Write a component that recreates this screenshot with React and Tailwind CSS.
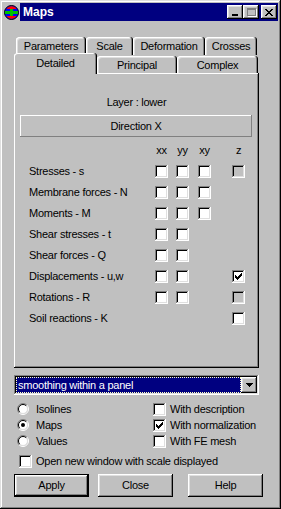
import React from 'react';

// win98 bevels
const RAISED =
  'shadow-[inset_-1px_-1px_0_#000,inset_1px_1px_0_#fff,inset_-2px_-2px_0_#808080,inset_2px_2px_0_#dfdfdf]';
const WINDOW =
  'shadow-[inset_-1px_-1px_0_#000,inset_1px_1px_0_#dfdfdf,inset_-2px_-2px_0_#808080,inset_2px_2px_0_#fff]';
const SUNKEN =
  'shadow-[inset_-1px_-1px_0_#fff,inset_1px_1px_0_#808080,inset_-2px_-2px_0_#dfdfdf,inset_2px_2px_0_#000]';
const TAB = 'shadow-[inset_-1px_0_0_#000,inset_1px_1px_0_#fff,inset_-2px_0_0_#808080,inset_2px_2px_0_#dfdfdf]';

function Check() {
  return (
    <svg width="7" height="7" viewBox="0 0 7 7" shapeRendering="crispEdges">
      <rect x="6" y="0" width="1" height="1" />
      <rect x="5" y="1" width="2" height="1" />
      <rect x="0" y="2" width="1" height="1" />
      <rect x="4" y="2" width="3" height="1" />
      <rect x="0" y="3" width="2" height="1" />
      <rect x="3" y="3" width="3" height="1" />
      <rect x="0" y="4" width="5" height="1" />
      <rect x="1" y="5" width="3" height="1" />
      <rect x="2" y="6" width="1" height="1" />
    </svg>
  );
}

function Box({ checked, disabled }) {
  return (
    <div
      className={`w-[13px] h-[13px] shrink-0 flex items-center justify-center ${SUNKEN} ${
        disabled ? 'bg-[#c0c0c0]' : 'bg-white'
      }`}
    >
      {checked && <Check />}
    </div>
  );
}

function Radio({ checked }) {
  return (
    <svg width="12" height="12" viewBox="0 0 12 12" className="shrink-0">
      <circle cx="6" cy="6" r="4.5" fill="#fff" />
      <path d="M2.1 9.9 A5.5 5.5 0 0 1 9.9 2.1" fill="none" stroke="#808080" />
      <path d="M9.9 2.1 A5.5 5.5 0 0 1 2.1 9.9" fill="none" stroke="#fff" />
      <path d="M2.8 9.2 A4.5 4.5 0 0 1 9.2 2.8" fill="none" stroke="#000" />
      <path d="M9.2 2.8 A4.5 4.5 0 0 1 2.8 9.2" fill="none" stroke="#dfdfdf" />
      {checked && <circle cx="6" cy="6" r="2" fill="#000" />}
    </svg>
  );
}

function TitleBtn({ children }) {
  return (
    <div className={`w-[16px] h-[14px] bg-[#c0c0c0] flex items-center justify-center ${RAISED}`}>
      {children}
    </div>
  );
}

const rows = [
  ['Stresses - s', [0, 0, 0, 'd']],
  ['Membrane forces - N', [0, 0, 0, null]],
  ['Moments - M', [0, 0, 0, null]],
  ['Shear stresses - t', [0, 0, null, null]],
  ['Shear forces - Q', [0, 0, null, null]],
  ['Displacements - u,w', [0, 0, null, 'c']],
  ['Rotations - R', [0, 0, null, 'd']],
  ['Soil reactions - K', [null, null, null, 0]],
];

function Cell({ v, className }) {
  return (
    <div className={`w-[13px] h-[13px] ${className}`}>
      {v !== null && <Box checked={v === 'c'} disabled={v === 'd'} />}
    </div>
  );
}

export default function App() {
  return (
    <div
      className={`w-[281px] h-[509px] bg-[#c0c0c0] p-[3px] flex flex-col text-[11px] leading-[13px] tracking-[-0.25px] text-black font-['Liberation_Sans',Arial,sans-serif] ${WINDOW}`}
    >
      {/* title bar */}
      <div className="h-[18px] bg-[#000080] flex items-center pr-[1px] tracking-normal">
        <div className="w-[17px] h-[18px] bg-[#c0c0c0] flex items-center justify-center">
          <svg width="15" height="15" viewBox="0 0 15 15">
            <circle cx="7.5" cy="7.5" r="7" fill="#0000ff" stroke="#000" />
            <path d="M2.5 4 A6 6 0 0 1 12.5 4 Z" fill="#ff0000" />
            <path d="M2.5 11 A6 6 0 0 0 12.5 11 Z" fill="#ff0000" />
            <rect x="1" y="6" width="13" height="3" fill="#00c000" />
            <rect x="6" y="4" width="3" height="7" fill="#00c000" />
          </svg>
        </div>
        <span className="ml-[3px] text-white font-bold text-[12px]">Maps</span>
        <div className="ml-auto flex items-center">
          <TitleBtn>
            <div className="w-[6px] h-[2px] bg-black mt-[6px] -ml-[1px]" />
          </TitleBtn>
          <TitleBtn>
            <div className="w-[9px] h-[8px] border border-t-2 border-[#808080] shadow-[1px_1px_0_#fff]" />
          </TitleBtn>
          <div className="w-[2px]" />
          <TitleBtn>
            <svg width="8" height="7" viewBox="0 0 8 7" shapeRendering="crispEdges">
              <path d="M0 0h2v1h-2zM6 0h2v1h-2zM1 1h2v1h-2zM5 1h2v1h-2zM2 2h4v1h-4zM3 3h2v1h-2zM2 4h4v1h-4zM1 5h2v1h-2zM5 5h2v1h-2zM0 6h2v1h-2zM6 6h2v1h-2z" />
            </svg>
          </TitleBtn>
        </div>
      </div>

      {/* tabs */}
      <div className="mt-[16px] ml-[13px] flex h-[18px]">
        <div className={`w-[70px] h-[18px] rounded-t-[3px] flex justify-center pt-[3px] ${TAB}`}>Parameters</div>
        <div className={`w-[47px] h-[18px] rounded-t-[3px] flex justify-center pt-[3px] ${TAB}`}>Scale</div>
        <div className={`w-[72px] h-[18px] rounded-t-[3px] flex justify-center pt-[3px] ${TAB}`}>Deformation</div>
        <div className={`w-[52px] h-[18px] rounded-t-[3px] flex justify-center pt-[3px] ${TAB}`}>Crosses</div>
      </div>
      <div className="ml-[11px] flex h-[18px] items-start">
        <div
          className={`relative z-10 -mt-[2px] w-[83px] h-[21px] bg-[#c0c0c0] rounded-t-[3px] flex justify-center pt-[4px] shadow-[inset_-1px_0_0_#000,inset_1px_1px_0_#fff,inset_-2px_0_0_#808080]`}
        >
          Detailed
        </div>
        <div className={`mt-[1px] w-[80px] h-[17px] rounded-t-[3px] flex justify-center pt-[3px] ${TAB}`}>Principal</div>
        <div className={`mt-[1px] w-[81px] h-[17px] rounded-t-[3px] flex justify-center pt-[3px] ${TAB}`}>Complex</div>
      </div>

      {/* panel */}
      <div
        className={`ml-[11px] w-[245px] h-[295px] flex flex-col pt-[23px] shadow-[inset_-1px_-1px_0_#000,inset_1px_1px_0_#fff,inset_-2px_-2px_0_#808080]`}
      >
        <div className="text-center">Layer : lower</div>
        <div
          className={`mt-[6px] ml-[6px] w-[232px] h-[22px] flex items-center justify-center shadow-[inset_-1px_-1px_0_#808080,inset_1px_1px_0_#fff]`}
        >
          Direction X
        </div>
        <div className="mt-[3px] h-[21px] flex items-center pl-[141px]">
          <div className="w-[13px] text-center">xx</div>
          <div className="w-[13px] ml-[8px] text-center">yy</div>
          <div className="w-[13px] ml-[9px] text-center">xy</div>
          <div className="w-[13px] ml-[21px] text-center">z</div>
        </div>
        {rows.map(([label, v]) => (
          <div key={label} className="h-[21px] flex items-center pl-[15px]">
            <div className="w-[126px]">{label}</div>
            <Cell v={v[0]} className="" />
            <Cell v={v[1]} className="ml-[8px]" />
            <Cell v={v[2]} className="ml-[9px]" />
            <Cell v={v[3]} className="ml-[21px]" />
          </div>
        ))}
      </div>

      {/* combo */}
      <div className={`mt-[7px] ml-[11px] w-[245px] h-[20px] bg-white p-[2px] flex ${SUNKEN}`}>
        <div className="flex-1 bg-[#000080] border border-dotted border-[#ffffc0] text-white flex items-center pl-[1px]">
          smoothing within a panel
        </div>
        <div className={`w-[16px] bg-[#c0c0c0] flex items-center justify-center ${RAISED}`}>
          <svg width="7" height="4" viewBox="0 0 7 4" shapeRendering="crispEdges">
            <path d="M0 0h7v1h-7zM1 1h5v1h-5zM2 2h3v1h-3zM3 3h1v1h-1z" />
          </svg>
        </div>
      </div>

      {/* options */}
      <div className="mt-[6px] flex flex-col">
        {[
          ['Isolines', false, 'With description', false],
          ['Maps', true, 'With normalization', true],
          ['Values', false, 'With FE mesh', false],
        ].map(([r, rc, c, cc]) => (
          <div key={r} className="h-[16px] flex items-center">
            <div className="w-[150px] pl-[14px] flex items-center gap-[7px]">
              <Radio checked={rc} />
              <span>{r}</span>
            </div>
            <div className="flex items-center gap-[4px]">
              <Box checked={cc} />
              <span>{c}</span>
            </div>
          </div>
        ))}
        <div className="mt-[4px] h-[16px] flex items-center pl-[16px] gap-[4px]">
          <Box />
          <span>Open new window with scale displayed</span>
        </div>
      </div>

      {/* buttons */}
      <div className="mt-[5px] ml-[11px] flex">
        <div className="w-[75px] h-[23px] border border-black">
          <div className={`w-full h-full flex items-center justify-center ${RAISED}`}>Apply</div>
        </div>
        <div className={`ml-[9px] w-[75px] h-[23px] flex items-center justify-center ${RAISED}`}>Close</div>
        <div className={`ml-[15px] w-[75px] h-[23px] flex items-center justify-center ${RAISED}`}>Help</div>
      </div>
    </div>
  );
}
